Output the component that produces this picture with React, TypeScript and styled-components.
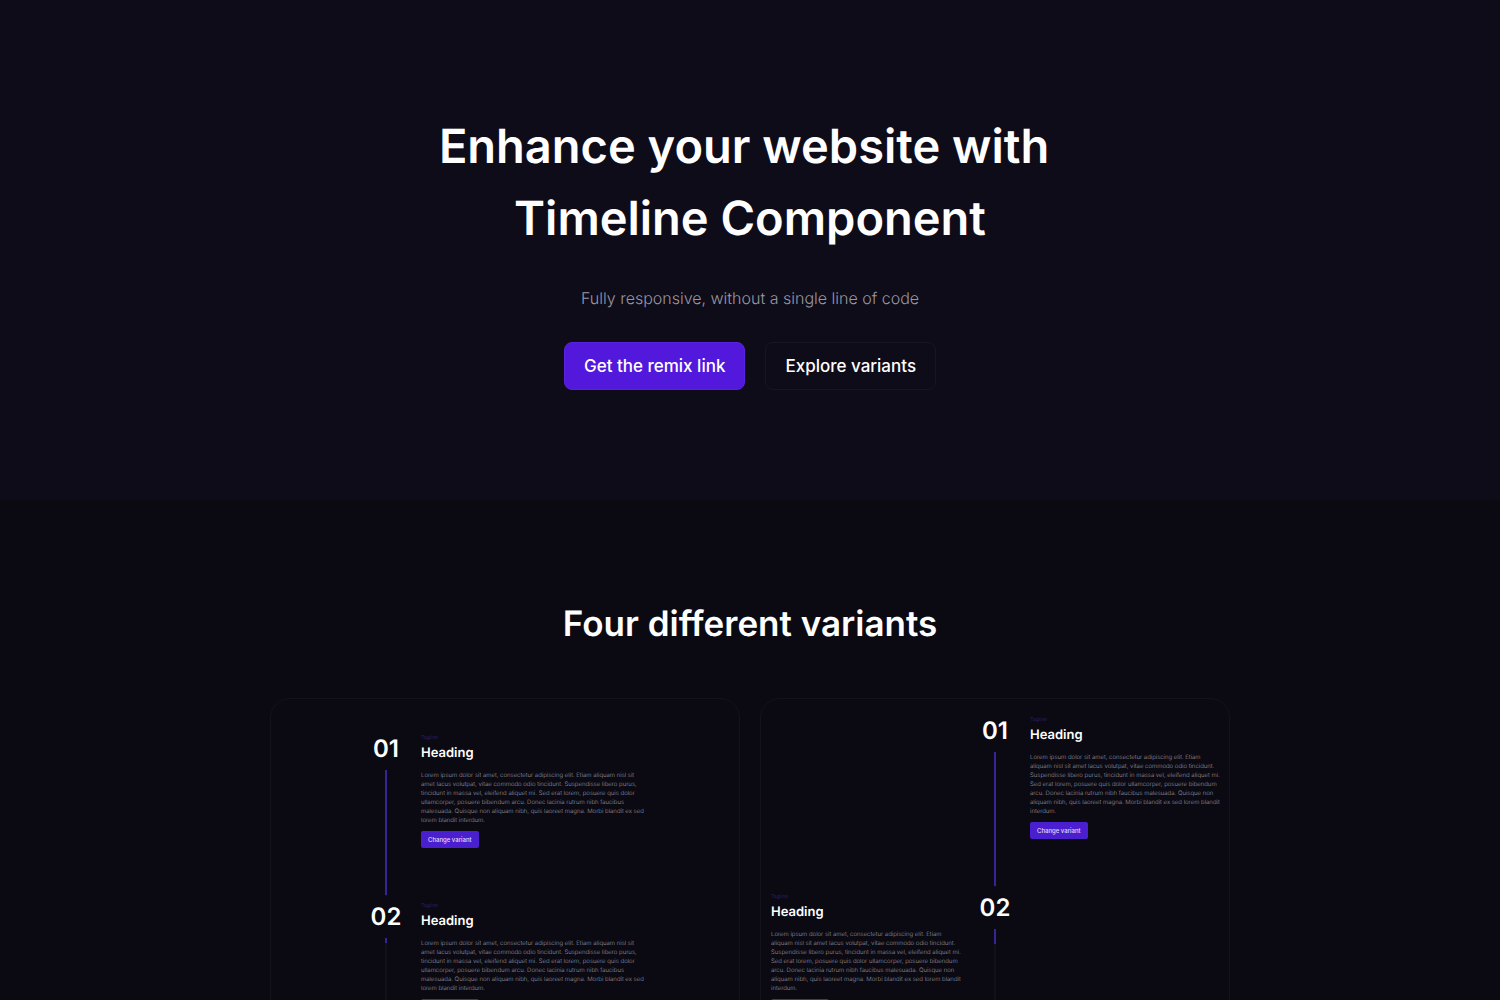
import React from 'react';
import styled, { createGlobalStyle } from 'styled-components';

const GlobalStyle = createGlobalStyle`
  *, *::before, *::after { box-sizing: border-box; }
  body {
    margin: 0;
    background: #0b0a12;
    color: #fff;
    font-family: Inter, "Liberation Sans", sans-serif;
    text-rendering: geometricPrecision;
  }
  h1, h2, h3, p { margin: 0; }
`;

const Hero = styled.header`
  display: flex;
  flex-direction: column;
  align-items: center;
  padding: 111px 20px 110px;
  background: #0f0c19;
  text-align: center;
`;

const Title = styled.h1`
  font-size: 47px;
  line-height: 72px;
  font-weight: 600;
`;

const Lead = styled.p`
  margin-top: 31px;
  font-size: 16px;
  line-height: 24px;
  font-weight: 300;
  color: #9a98a3;
`;

const Actions = styled.div`
  display: flex;
  flex-wrap: wrap;
  justify-content: center;
  gap: 20px;
  margin-top: 32px;
`;

const Button = styled.button<{ $primary?: boolean }>`
  height: 48px;
  padding: 0 19px;
  border: 1px solid ${(p) => (p.$primary ? '#5a22e0' : '#191624')};
  border-radius: 8px;
  background: ${(p) => (p.$primary ? '#5218dc' : 'transparent')};
  color: #fff;
  font-family: inherit;
  font-size: 17px;
  font-weight: 500;
  cursor: pointer;
`;

const Variants = styled.main`
  padding: 97px 20px 100px;
`;

const SectionTitle = styled.h2`
  font-size: 35px;
  line-height: 54px;
  font-weight: 600;
  text-align: center;
`;

const Cards = styled.div`
  display: grid;
  grid-template-columns: repeat(auto-fit, minmax(300px, 1fr));
  gap: 20px;
  max-width: 960px;
  margin: 47px auto 0;
`;

const Card = styled.article<{ $top: number }>`
  padding: ${(p) => p.$top}px 9px 0;
  border: 1px solid #14121c;
  border-radius: 20px;
`;

const Step = styled.section<{ $columns: string }>`
  display: grid;
  grid-template-columns: ${(p) => p.$columns};
  column-gap: 20px;
  justify-content: center;
`;

const Marker = styled.div<{ $column: number }>`
  grid-column: ${(p) => p.$column};
  grid-row: 1;
  display: flex;
  flex-direction: column;
  align-items: center;
  padding-bottom: 6px;
`;

const Count = styled.span`
  margin-bottom: 6px;
  font-size: 24px;
  line-height: 30px;
  font-weight: 600;
`;

const Track = styled.div`
  flex: 1;
  width: 2px;
  background: #12101c;
`;

const Progress = styled.div<{ $fill: string }>`
  width: 2px;
  height: ${(p) => p.$fill};
  background: #3a2399;
`;

const Content = styled.div<{ $column: number }>`
  grid-column: ${(p) => p.$column};
  grid-row: 1;
  padding-bottom: 54px;
`;

const Tagline = styled.p`
  font-size: 5px;
  line-height: 8px;
  color: #2b1c66;
`;

const StepTitle = styled.h3`
  margin: 1px 0 8px;
  font-size: 13px;
  line-height: 20px;
  font-weight: 600;
`;

const Copy = styled.p`
  font-size: 6px;
  line-height: 9px;
  font-weight: 300;
  white-space: pre;
  color: #9a98a2;
`;

const SmallButton = styled.button`
  display: block;
  height: 17px;
  margin-top: 6px;
  padding: 0 7px;
  border: 0;
  border-radius: 2px;
  background: #4a1fcf;
  color: #e4dcfa;
  font-family: inherit;
  font-size: 6px;
  font-weight: 500;
  cursor: pointer;
`;

const WIDE_COPY = [
  'Lorem ipsum dolor sit amet, consectetur adipiscing elit. Etiam aliquam nisl sit',
  'amet lacus volutpat, vitae commodo odio tincidunt. Suspendisse libero purus,',
  'tincidunt in massa vel, eleifend aliquet mi. Sed erat lorem, posuere quis dolor',
  'ullamcorper, posuere bibendum arcu. Donec lacinia rutrum nibh faucibus',
  'malesuada. Quisque non aliquam nibh, quis laoreet magna. Morbi blandit ex sed',
  'lorem blandit interdum.',
].join('\n');

const NARROW_COPY = [
  'Lorem ipsum dolor sit amet, consectetur adipiscing elit. Etiam',
  'aliquam nisl sit amet lacus volutpat, vitae commodo odio tincidunt.',
  'Suspendisse libero purus, tincidunt in massa vel, eleifend aliquet mi.',
  'Sed erat lorem, posuere quis dolor ullamcorper, posuere bibendum',
  'arcu. Donec lacinia rutrum nibh faucibus malesuada. Quisque non',
  'aliquam nibh, quis laoreet magna. Morbi blandit ex sed lorem blandit',
  'interdum.',
].join('\n');

type StepProps = {
  count: string;
  fill: string;
  columns: string;
  markerColumn: number;
  contentColumn: number;
  copy: string;
};

function TimelineStep({ count, fill, columns, markerColumn, contentColumn, copy }: StepProps) {
  return (
    <Step $columns={columns}>
      <Marker $column={markerColumn}>
        <Count>{count}</Count>
        <Track>
          <Progress $fill={fill} />
        </Track>
      </Marker>
      <Content $column={contentColumn}>
        <Tagline>Tagline</Tagline>
        <StepTitle>Heading</StepTitle>
        <Copy>{copy}</Copy>
        <SmallButton type="button">Change variant</SmallButton>
      </Content>
    </Step>
  );
}

const SINGLE = '30px minmax(0, 218px)';
const ALTERNATING = 'minmax(0, 189px) 30px minmax(0, 189px)';

export default function App() {
  return (
    <>
      <GlobalStyle />
      <Hero>
        <Title>
          Enhance your website with{'\u00a0'}
          <br />
          Timeline Component
        </Title>
        <Lead>Fully responsive, without a single line of code</Lead>
        <Actions>
          <Button type="button" $primary>
            Get the remix link
          </Button>
          <Button type="button">Explore variants</Button>
        </Actions>
      </Hero>
      <Variants>
        <SectionTitle>Four different variants</SectionTitle>
        <Cards>
          <Card $top={35}>
            <TimelineStep count="01" fill="125px" columns={SINGLE} markerColumn={1} contentColumn={2} copy={WIDE_COPY} />
            <TimelineStep count="02" fill="5px" columns={SINGLE} markerColumn={1} contentColumn={2} copy={WIDE_COPY} />
          </Card>
          <Card $top={17}>
            <TimelineStep count="01" fill="134px" columns={ALTERNATING} markerColumn={2} contentColumn={3} copy={NARROW_COPY} />
            <TimelineStep count="02" fill="15px" columns={ALTERNATING} markerColumn={2} contentColumn={1} copy={NARROW_COPY} />
          </Card>
        </Cards>
      </Variants>
    </>
  );
}
